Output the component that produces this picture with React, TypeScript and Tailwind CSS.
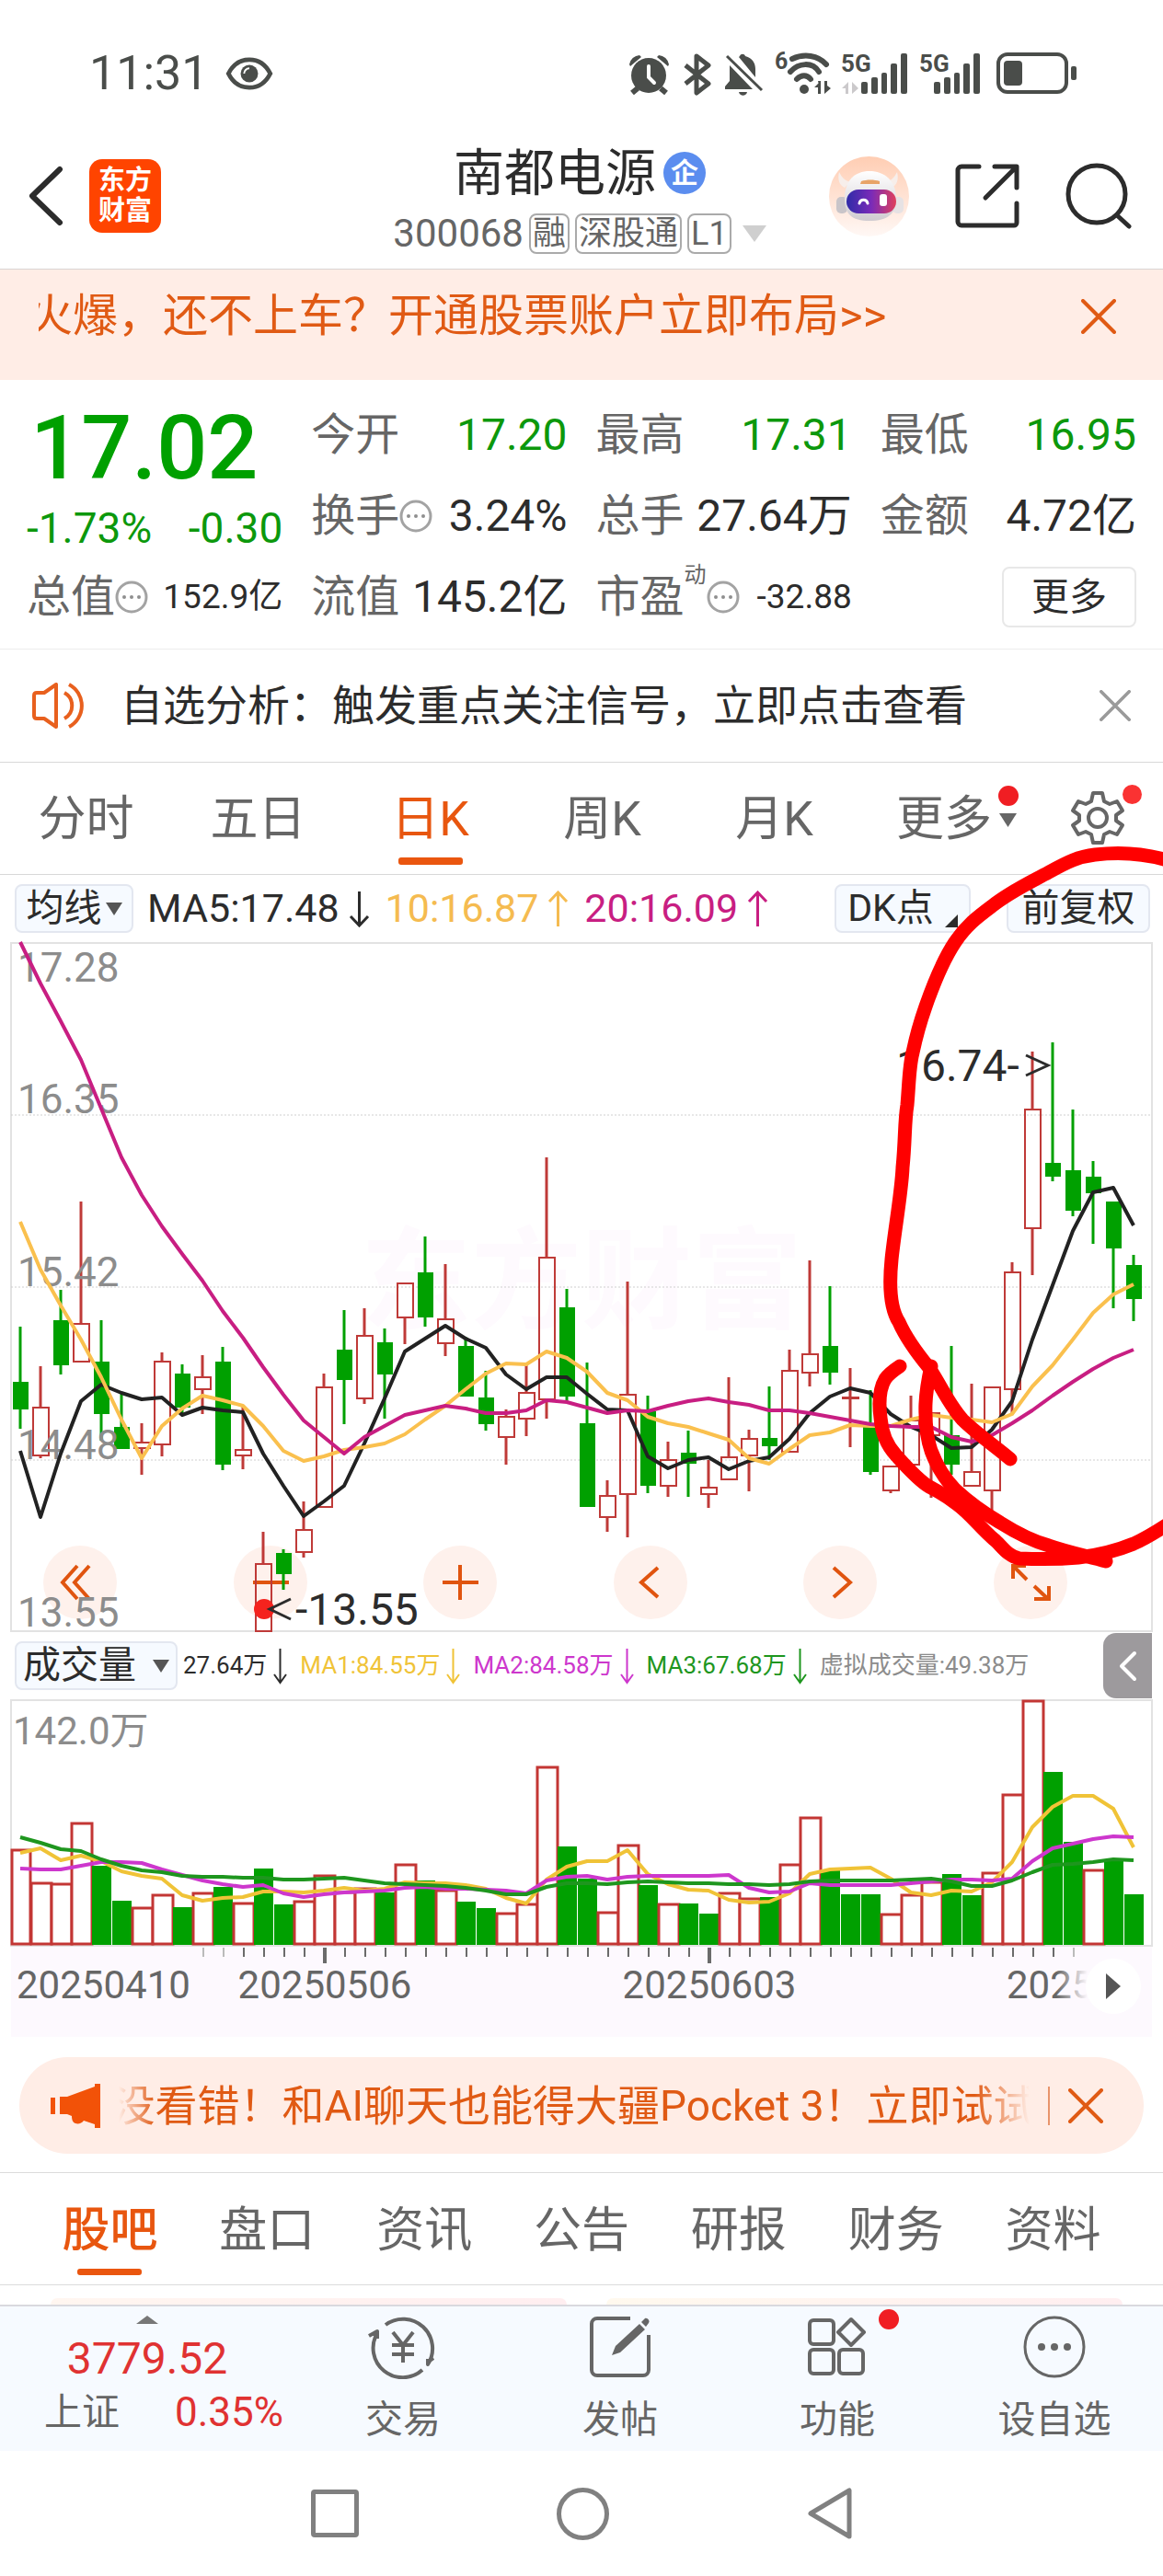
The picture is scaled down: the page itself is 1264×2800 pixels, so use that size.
import { useState } from 'react';
import type { ReactNode } from 'react';

type Dir = 'up' | 'down';

// [high, body top, body bottom, low], in chart units from the top of the frame
const CANDLES = [
  [418, 478, 508, 529], [461, 505, 559, 561], [378, 411, 460, 470], [282, 414, 457, 457],
  [411, 456, 513, 542], [490, 527, 551, 551], [523, 543, 551, 579], [446, 455, 547, 559],
  [459, 469, 506, 512], [449, 472, 487, 513], [440, 456, 568, 574], [504, 551, 559, 573],
  [641, 675, 750, 750], [660, 664, 687, 704], [608, 638, 664, 669], [469, 483, 615, 615],
  [400, 443, 476, 524], [398, 427, 497, 502], [420, 435, 470, 518], [370, 370, 409, 437],
  [320, 359, 408, 418], [350, 409, 437, 450], [429, 439, 494, 494], [466, 495, 524, 531],
  [508, 515, 539, 568], [460, 489, 519, 537], [234, 342, 498, 518], [377, 397, 494, 499],
  [457, 523, 614, 614], [585, 601, 626, 641], [369, 491, 601, 647], [493, 510, 591, 599],
  [543, 562, 592, 603], [531, 555, 567, 603], [563, 592, 601, 615], [473, 559, 585, 585],
  [530, 539, 559, 597], [483, 539, 548, 563], [443, 465, 555, 555], [346, 447, 469, 483],
  [374, 439, 468, 481], [463, 494, 497, 549], [487, 527, 576, 579], [569, 569, 597, 599],
  [493, 519, 569, 569], [511, 511, 537, 604], [439, 536, 568, 579], [480, 575, 592, 592],
  [483, 483, 597, 626], [348, 358, 487, 513], [119, 181, 312, 362], [109, 240, 255, 260],
  [182, 248, 292, 298], [238, 255, 273, 328], [282, 282, 333, 398], [340, 351, 388, 412],
];
const CANDLE_DIR = 'grgrggrrgrgrrgrrgrgrgrggrrrggrrgrgrrrgrrgrgrrrgrrrrggggg';

const MA5 = [553, 625, 556, 499, 481, 490, 497, 495, 514, 506, 509, 511, 556, 591, 624, 608, 591, 545, 496, 445, 431, 417, 431, 441, 470, 486, 473, 473, 491, 508, 509, 559, 572, 563, 560, 573, 564, 560, 540, 512, 494, 485, 490, 513, 527, 536, 550, 549, 530, 499, 432, 373, 314, 272, 267, 308];
const MA10 = [304, 356, 395, 432, 473, 519, 561, 526, 507, 493, 498, 504, 526, 553, 564, 559, 552, 549, 545, 535, 519, 504, 486, 469, 458, 459, 445, 452, 467, 490, 498, 516, 523, 527, 534, 541, 561, 567, 551, 536, 533, 525, 526, 526, 519, 514, 517, 519, 522, 513, 483, 460, 432, 403, 383, 372];
const MA20 = [0, 45, 86, 128, 181, 234, 275, 309, 339, 368, 401, 430, 462, 492, 520, 538, 556, 538, 526, 514, 509, 504, 507, 512, 512, 509, 498, 500, 506, 512, 509, 510, 504, 499, 496, 500, 503, 509, 509, 512, 516, 520, 524, 526, 527, 527, 538, 543, 536, 523, 509, 493, 478, 464, 452, 443];

const VOLUMES = [163, 199, 200, 134, 181, 219, 226, 212, 226, 210, 204, 221, 184, 223, 219, 191, 209, 205, 210, 179, 197, 207, 220, 227, 232, 222, 73, 160, 195, 231, 158, 202, 222, 222, 233, 210, 216, 215, 179, 128, 186, 212, 212, 233, 212, 198, 190, 213, 188, 103, 1, 79, 155, 185, 175, 212];
const VOLUME_DIR = 'rrrrggrrgrgrggrrrrgrgrggrrrggrrgrggrrgrrgggrrrggrrrggrgg';
const VMA1 = [167, 162, 175, 170, 176, 187, 192, 195, 213, 219, 216, 215, 209, 209, 210, 208, 205, 208, 206, 199, 200, 200, 202, 206, 216, 222, 196, 182, 176, 176, 164, 190, 201, 207, 208, 218, 221, 220, 211, 190, 185, 184, 183, 195, 210, 213, 208, 209, 199, 177, 139, 117, 105, 105, 119, 161];
const VMA2 = [184, 185, 185, 181, 177, 177, 178, 185, 191, 197, 201, 204, 202, 211, 215, 212, 210, 209, 208, 205, 204, 206, 206, 207, 208, 211, 197, 193, 192, 196, 193, 192, 192, 192, 192, 191, 205, 210, 209, 200, 202, 202, 202, 202, 200, 198, 196, 196, 197, 195, 176, 162, 157, 152, 149, 150];
const VMA3 = [150, 156, 163, 165, 174, 181, 186, 188, 192, 193, 193, 194, 194, 196, 196, 195, 194, 197, 200, 201, 202, 203, 205, 208, 212, 212, 204, 200, 200, 201, 199, 198, 199, 200, 200, 201, 201, 202, 201, 198, 197, 197, 197, 197, 196, 195, 198, 203, 203, 197, 188, 180, 179, 177, 174, 175];

const RED = '#bf3a38';
const GREEN = '#00a000';

const xAt = (i: number) => 22 + i * 22;
const toPoints = (values: number[]) => values.map((v, i) => `${xAt(i)},${v}`).join(' ');

function StatusBar() {
  return (
    <div className="flex h-[160px] items-center justify-between pr-[93px] pl-[97px] text-[#4a4d4a]">
      <div className="flex items-center gap-[18px]">
        <span className="text-[52px] leading-none">11:31</span>
        <svg className="h-[36px] w-[52px]" viewBox="0 0 54 38" fill="none">
          <path d="M3 19C8 9 16 3 27 3s19 6 24 16c-5 10-13 16-24 16S8 29 3 19z" stroke="currentColor" strokeWidth="5" />
          <circle cx="27" cy="19" r="10" fill="currentColor" />
          <path d="M27 13a6 6 0 0 0-6 6" stroke="#fff" strokeWidth="2" />
        </svg>
      </div>
      <svg className="h-[50px] w-[488px] overflow-visible" viewBox="683 54 488 50" fill="currentColor">
        {/* alarm */}
        <circle cx="705" cy="81" r="19" />
        <path d="M684 69a12 12 0 0 1 11-10l2 2-12 10zM727 69a12 12 0 0 0-11-10l-2 2 12 10z" />
        <path d="M693 95l-6 5M718 95l6 5" stroke="currentColor" strokeWidth="6" />
        <path d="M705 71v12l6 6" stroke="#fff" strokeWidth="4" fill="none" strokeLinecap="round" />
        {/* bluetooth */}
        <path d="M745 70l25 20-13 10V60l13 10-25 20" fill="none" stroke="currentColor" strokeWidth="5" strokeLinejoin="round" />
        {/* muted bell */}
        <path d="M793 70l25 26h-30v-3l5-6zM803 61l1-1c1-3 5-3 6 0 8 2 11 8 11 14v9z" />
        <path d="M790 60l38 37" stroke="currentColor" strokeWidth="3" />
        <path d="M803 99h9c-1 5-8 5-9 0z" />
        {/* wifi */}
        <text x="842" y="74" fontSize="25" fontWeight="700">6</text>
        <g fill="none" stroke="currentColor" strokeWidth="6" strokeLinecap="round">
          <path d="M861 63c13-6 28-4 37 6" />
          <path d="M859 77c9-10 24-11 31 0" />
          <path d="M866 85c5-5 11-5 15 0" />
        </g>
        <circle cx="874" cy="96" r="5" />
        <path d="M892 87v14h-3v-7h-4zM896 101V87h3v5l4 3zM889 87h3v14" />
        {/* signal */}
        <text x="914" y="77" fontSize="26" fontWeight="700">5G</text>
        <path d="M922 88v13h-3v-6h-4zM926 101V88l7 7z" fill="#cbc9cb" />
        <rect x="936" y="88" width="7" height="13" rx="2" />
        <rect x="947" y="83" width="7" height="18" rx="2" />
        <rect x="958" y="78" width="6" height="23" rx="2" />
        <rect x="968" y="68" width="7" height="33" rx="2" />
        <rect x="979" y="57" width="7" height="44" rx="2" />
        <text x="999" y="77" fontSize="26" fontWeight="700">5G</text>
        <rect x="1015" y="88" width="7" height="13" rx="2" />
        <rect x="1026" y="83" width="7" height="18" rx="2" />
        <rect x="1037" y="78" width="6" height="23" rx="2" />
        <rect x="1047" y="68" width="7" height="33" rx="2" />
        <rect x="1058" y="57" width="7" height="44" rx="2" />
        {/* battery */}
        <rect x="1085" y="58" width="74" height="41" rx="10" fill="none" stroke="currentColor" strokeWidth="4" />
        <rect x="1091" y="65" width="20" height="27" rx="4" />
        <rect x="1164" y="71" width="6" height="15" rx="2" />
      </svg>
    </div>
  );
}

function Robot() {
  return (
    <svg className="h-[87px] w-[87px]" viewBox="0 0 87 87">
      <defs>
        <linearGradient id="halo" x1="0" y1="0" x2="0" y2="1">
          <stop offset="0" stopColor="#ffcdb3" />
          <stop offset="1" stopColor="#fff8f5" />
        </linearGradient>
        <linearGradient id="visor" x1="0" y1="0" x2="1" y2="0">
          <stop offset="0" stopColor="#2f2ba8" />
          <stop offset="0.5" stopColor="#7a2bb8" />
          <stop offset="1" stopColor="#e0405c" />
        </linearGradient>
        <linearGradient id="shell" x1="0" y1="0" x2="0" y2="1">
          <stop offset="0" stopColor="#ffffff" />
          <stop offset="1" stopColor="#cfcbd0" />
        </linearGradient>
      </defs>
      <circle cx="43.5" cy="43.5" r="43.5" fill="url(#halo)" />
      <path d="M11 17c-2 8 0 14 6 17l6-6c-6-2-9-5-12-11zM74 17c2 8 0 14-6 17l-6-6c6-2 9-5 12-11z" fill="#f7eeea" />
      <rect x="8" y="44" width="12" height="18" rx="5" fill="#c9c5c9" />
      <rect x="69" y="44" width="12" height="18" rx="5" fill="#e6e2e4" />
      <path d="M17 46C17 26 28 16 44 16s29 10 29 30c0 16-9 24-29 24S17 62 17 46z" fill="url(#shell)" />
      <path d="M35 27c6-2 14-2 20 0v3H34z" fill="#e8a468" />
      <rect x="19" y="36" width="54" height="26" rx="13" fill="url(#visor)" />
      <path d="M33 51c1-5 8-5 9 0" stroke="#fff" strokeWidth="3" fill="none" strokeLinecap="round" />
      <rect x="55" y="41" width="8" height="13" rx="3" fill="#fff" />
    </svg>
  );
}

function Header() {
  return (
    <header className="flex h-[133px] items-center justify-between border-b border-[#d9d4d2] pr-[34px] pb-[26px] pl-[30px] text-[#2c2c2c]">
      <div className="flex w-[346px] items-center gap-[28px]">
        <button aria-label="返回">
          <svg className="h-[66px] w-[39px]" viewBox="0 0 39 66" fill="none" stroke="currentColor" strokeWidth="6" strokeLinejoin="round" strokeLinecap="round">
            <path d="M35 4L5 33l30 29" />
          </svg>
        </button>
        <div className="flex h-[80px] w-[78px] flex-col items-center justify-center rounded-[14px] bg-[#ff4400] text-[29px] leading-[33px] font-bold text-white">
          <span>东方</span>
          <span>财富</span>
        </div>
      </div>
      <div className="flex flex-col items-center gap-[16px] self-start">
        <h1 className="flex items-center gap-[8px] text-[55px] leading-[56px]">
          南都电源
          <span className="flex h-[46px] w-[46px] items-center justify-center rounded-full bg-[#5b8def] text-[30px] font-bold text-white">企</span>
        </h1>
        <div className="flex items-center gap-[6px] text-[#666]">
          <span className="text-[42px] leading-[44px]">300068</span>
          <span className="rounded-[8px] border-2 border-[#aaa] px-[2px] text-[36px] leading-[40px]">融</span>
          <span className="rounded-[8px] border-2 border-[#aaa] px-[2px] text-[36px] leading-[40px]">深股通</span>
          <span className="rounded-[8px] border-2 border-[#aaa] px-[2px] text-[36px] leading-[40px]">L1</span>
          <svg className="ml-[6px] h-[18px] w-[26px]" viewBox="0 0 26 18"><path d="M0 0h26L13 18z" fill="#cfcfcf" /></svg>
        </div>
      </div>
      <div className="flex w-[346px] items-center justify-end gap-[50px]">
        <Robot />
        <button aria-label="分享">
          <svg className="h-[70px] w-[70px]" viewBox="0 0 70 70" fill="none" stroke="currentColor" strokeWidth="5" strokeLinecap="round" strokeLinejoin="round">
            <path d="M26 3H7a4 4 0 0 0-4 4v56a4 4 0 0 0 4 4h57a3 3 0 0 0 3-3V43M43 3h24v23M66 4L33 37" />
          </svg>
        </button>
        <button aria-label="搜索">
          <svg className="h-[72px] w-[72px]" viewBox="0 0 72 72" fill="none" stroke="currentColor" strokeWidth="5" strokeLinecap="round">
            <circle cx="34" cy="34" r="31" />
            <path d="M56 57l13 12" />
          </svg>
        </button>
      </div>
    </header>
  );
}

function Cross({ className }: { className: string }) {
  return (
    <svg className={className} viewBox="0 0 38 38" fill="none" stroke="currentColor" strokeWidth="4" strokeLinecap="round">
      <path d="M2 2l34 34M36 2L2 36" />
    </svg>
  );
}

function InfoDots() {
  return (
    <svg className="h-9 w-9 shrink-0" viewBox="0 0 36 36" fill="#8f8f8f">
      <circle cx="18" cy="18" r="16" fill="none" stroke="#a3a3a3" strokeWidth="3" />
      <circle cx="10" cy="18" r="2" />
      <circle cx="18" cy="18" r="2" />
      <circle cx="26" cy="18" r="2" />
    </svg>
  );
}

interface StatProps {
  label: string;
  value: string;
  green?: boolean;
  small?: boolean;
  info?: boolean;
  sup?: string;
}

function Stat({ label, value, green, small, info, sup }: StatProps) {
  return (
    <div className="flex h-[88px] items-center justify-between whitespace-nowrap">
      <span className="flex items-center text-[48px] text-[#666]">
        {label}
        {sup && <sup className="top-0 self-start text-[24px] leading-none">{sup}</sup>}
        {info && <InfoDots />}
      </span>
      <span className={`${small ? 'text-[37px]' : 'text-[48px]'} ${green ? 'text-[#0c980c]' : 'text-[#2c2c2c]'}`}>{value}</span>
    </div>
  );
}

function Quote() {
  return (
    <section className="grid grid-cols-4 gap-x-[31px] border-b border-[#ececec] px-[29px] pt-[16px] pb-[12px]">
      <div className="row-span-2 text-[#00a000]">
        <div className="pt-[10px] pl-1 text-[97px] leading-[96px] font-medium">17.02</div>
        <div className="mt-[16px] flex justify-between text-[46px] leading-[46px] text-[#0c980c]">
          <span>-1.73%</span>
          <span>-0.30</span>
        </div>
      </div>
      <Stat label="今开" value="17.20" green />
      <Stat label="最高" value="17.31" green />
      <Stat label="最低" value="16.95" green />
      <Stat label="换手" value="3.24%" info />
      <Stat label="总手" value="27.64万" />
      <Stat label="金额" value="4.72亿" />
      <Stat label="总值" value="152.9亿" info small />
      <Stat label="流值" value="145.2亿" />
      <Stat label="市盈" value="-32.88" sup="动" info small />
      <div className="flex items-center justify-end">
        <button className="h-[66px] w-[146px] rounded-[8px] border-2 border-[#e8e8e8] text-[41px] leading-none text-[#2c2c2c]">更多</button>
      </div>
    </section>
  );
}

function PeriodTabs() {
  const [active, setActive] = useState('日K');
  return (
    <nav className="flex h-[122px] border-b border-[#d8d8d8] text-[52px] text-[#666]">
      {['分时', '五日', '日K', '周K', '月K', '更多'].map((name) => (
        <button key={name} onClick={() => setActive(name)} className={`flex flex-1 flex-col items-center pt-[32px] ${active === name ? 'text-[#e8560f]' : ''}`}>
          <span className={`relative flex items-center leading-[60px] ${name === '更多' ? 'ml-[22px]' : ''}`}>
            {name}
            {name === '更多' && (
              <>
                <svg className="ml-[8px] h-[15px] w-[19px]" viewBox="0 0 19 15"><path d="M0 0h19L9.5 15z" fill="#666" /></svg>
                <span className="absolute -top-[7px] -right-[2px] h-[22px] w-[22px] rounded-full bg-[#f01e23]" />
              </>
            )}
          </span>
          {active === name && <span className="mt-[11px] h-[8px] w-[70px] rounded-[3px] bg-[#ea560f]" />}
        </button>
      ))}
      <button aria-label="设置" className="flex w-[142px] justify-center pt-[30px]">
        <span className="relative">
          <svg className="h-[60px] w-[60px]" viewBox="0 0 60 60" fill="none" stroke="#666" strokeWidth="4" strokeLinejoin="round">
            <path d="M25 3h10l2 9 6 3 8-3 6 10-7 5v6l7 5-6 10-8-3-6 3-2 9H25l-2-9-6-3-8 3-6-10 7-5v-6l-7-5 6-10 8 3 6-3z" />
            <circle cx="30" cy="30" r="10" />
          </svg>
          <span className="absolute -top-[6px] -right-[18px] h-[21px] w-[21px] rounded-full bg-[#fa3232]" />
        </span>
      </button>
    </nav>
  );
}

function Arrow({ dir, small }: { dir: Dir; small?: boolean }) {
  return (
    <svg className={small ? 'h-[40px] w-[15px]' : 'h-[40px] w-[23px]'} viewBox={small ? '4 0 15 40' : '0 0 23 40'} fill="none" stroke="currentColor" strokeWidth={small ? 2 : 3}>
      <path d={dir === 'down' ? (small ? 'M11.5 1v37M5 29l6.500 9 6.500-9' : 'M11.500 1v37M2 28l9.500 10 9.500-10') : 'M11.500 39V2M2 12l9.500-10L21 12'} />
    </svg>
  );
}

function Indicator({ children, dir, className, small }: { children: ReactNode; dir?: Dir; className: string; small?: boolean }) {
  return (
    <span className={`flex items-center whitespace-nowrap ${small ? 'gap-[7px]' : 'gap-[10px]'} ${className}`}>
      {children}
      {dir && <Arrow dir={dir} small={small} />}
    </span>
  );
}

const chip = 'flex h-[53px] items-center justify-center rounded-[8px] border-2 border-[#e3e7f0] bg-[#f6faff] text-[41px] leading-none text-[#2c2c2c]';

function PriceChart() {
  return (
    <svg className="pointer-events-none relative block w-full overflow-visible" viewBox="0 0 1264 750">
      <rect x="12" y="1" width="1240" height="748" fill="none" stroke="#e2e2e2" strokeWidth="2" />
      <text x="392" y="411" fontSize="120" fontWeight="700" fill="#fefafe">东方财富</text>
      {[188, 375, 563].map((y) => (
        <line key={y} x1="12" x2="1252" y1={y} y2={y} stroke="#cfcfcf" strokeDasharray="2 2" />
      ))}
      {CANDLES.map(([high, top, bottom, low], i) => {
        const x = xAt(i);
        const up = CANDLE_DIR[i] === 'r';
        return up ? (
          <g key={i} stroke={RED} strokeWidth="2" fill="none">
            <path d={`M${x} ${high}V${top}M${x} ${bottom}V${low}`} strokeWidth="3" />
            <rect x={x - 8} y={top + 1} width="17" height={Math.max(bottom - top - 2, 1)} />
          </g>
        ) : (
          <g key={i} fill={GREEN}>
            <path d={`M${x} ${high}V${low}`} stroke={GREEN} strokeWidth="3" />
            <rect x={x - 8} y={top} width="17" height={bottom - top} />
          </g>
        );
      })}
      <g fontSize="44" fill="#8c8c8c">
        <text x="19" y="43">17.28</text>
        <text x="19" y="186">16.35</text>
        <text x="19" y="374">15.42</text>
        <text x="19" y="562">14.48</text>
        <text x="19" y="744">13.55</text>
      </g>
      <g fill="none" strokeWidth="4" strokeLinejoin="round">
        <polyline points={toPoints(MA5)} stroke="#222" />
        <polyline points={toPoints(MA10)} stroke="#fac04e" />
        <polyline points={toPoints(MA20)} stroke="#c81e82" />
      </g>
      {/* lowest and highest price */}
      <circle cx="287" cy="725" r="11" fill="#f5231e" />
      <g fill="none" stroke="#2c2c2c" strokeWidth="3">
        <path d="M316 714l-23 11 23 11" />
        <path d="M1115 123l24 11-24 11" />
      </g>
      <g fontSize="48" fill="#2c2c2c">
        <text x="321" y="742">-13.55</text>
        <text x="974" y="151">16.74-</text>
      </g>
    </svg>
  );
}

const CONTROLS = [
  { label: '最左', path: 'M37 22L21 40l16 18M50 22L34 40l16 18' },
  { label: '缩小', path: 'M21 40h39' },
  { label: '放大', path: 'M21 40h39M40 21v38' },
  { label: '左移', path: 'M48 24L30 40l18 16' },
  { label: '右移', path: 'M33 24l18 16-18 16' },
  { label: '全屏', path: 'M21 36V22h14M22 23l14 14M60 44v14H44M58 57L44 44' },
];

function ChartControls() {
  return (
    <div className="absolute right-[104px] bottom-[14px] left-[47px] flex justify-between">
      {CONTROLS.map((c) => (
        <button key={c.label} aria-label={c.label} className="h-[80px] w-[80px] rounded-full bg-[#fef1ec]">
          <svg viewBox="0 0 80 80" fill="none" stroke="#e0540f" strokeWidth="4">
            <path d={c.path} />
          </svg>
        </button>
      ))}
    </div>
  );
}

function VolumeChart() {
  return (
    <svg className="block w-full" viewBox="0 0 1264 367">
      <rect x="12" y="267" width="1240" height="100" fill="#fdf9fe" />
      <rect x="12" y="1" width="1240" height="267" fill="none" stroke="#e2e2e2" strokeWidth="2" />
      <text x="14" y="49" fontSize="42" fill="#8c8c8c">142.0万</text>
      {VOLUMES.map((top, i) => {
        const x = xAt(i);
        return VOLUME_DIR[i] === 'r' ? (
          <rect key={i} x={i === 0 ? 13 : x - 10} y={top + 1} width={i === 0 ? 20 : 22} height={265 - top} fill="#fff" stroke="#c33634" strokeWidth="3" />
        ) : (
          <rect key={i} x={x - 10} y={top} width="21" height={267 - top} fill={GREEN} />
        );
      })}
      <g fill="none" strokeWidth="4" strokeLinejoin="round">
        <polyline points={toPoints(VMA1)} stroke="#f0c337" />
        <polyline points={toPoints(VMA2)} stroke="#cd37cd" />
        <polyline points={toPoints(VMA3)} stroke="#1e961e" />
      </g>
      {Array.from({ length: 44 }, (_, n) => n + 9).map((i) => {
        const major = i === 15 || i === 34;
        const faded = i < 11 || i === 52;
        return <line key={i} x1={xAt(i) + 1} x2={xAt(i) + 1} y1="270" y2={major ? 287 : 280} stroke={faded ? '#bbb' : '#6b6b6b'} strokeWidth={major ? 4 : 2} />;
      })}
      <defs>
        <linearGradient id="dateFade" gradientUnits="userSpaceOnUse" x1="1148" y1="0" x2="1182" y2="0">
          <stop offset="0" stopColor="#666" />
          <stop offset="1" stopColor="#666" stopOpacity="0" />
        </linearGradient>
      </defs>
      <g fontSize="42" fill="#666">
        <text x="18" y="325">20250410</text>
        <text x="353" y="325" textAnchor="middle">20250506</text>
        <text x="771" y="325" textAnchor="middle">20250603</text>
        <text x="1094" y="325" fill="url(#dateFade)">2025</text>
      </g>
      <circle cx="1210" cy="312" r="30" fill="#fff" />
      <path d="M1202 298v28l16-14z" fill="#555" />
    </svg>
  );
}

// hand-drawn marker strokes over the chart
function Marker() {
  return (
    <svg className="pointer-events-none absolute inset-x-0 top-0 w-full" viewBox="0 0 1264 900" fill="none" stroke="#ff0000" strokeWidth="15" strokeLinecap="round" strokeLinejoin="round">
      <path d="M1098 757C1080 742 1060 728 1046 714C1030 696 1020 672 1010 658C996 641 984 624 977 608C968 594 966 570 969 540C972 510 980 466 981 440C984 410 983 390 986 372C988 350 988 330 992 315C996 296 1000 282 1006 265C1014 242 1024 216 1038 195C1050 177 1062 168 1078 156C1098 140 1120 130 1140 119C1160 108 1172 102 1190 100C1215 97 1245 98 1275 108" />
      <path d="M1275 824C1260 834 1248 842 1232 849C1210 858 1190 862 1172 864C1150 866 1130 866 1108 865C1094 862 1088 850 1080 844C1066 832 1054 816 1040 806C1030 798 1020 792 1010 787C998 780 984 764 974 753C962 740 958 726 957 712C955 696 956 680 962 670C966 664 972 660 978 656" />
      <path d="M1012 656C1008 674 1005 690 1006 708C1006 724 1008 736 1012 748C1018 764 1028 780 1038 790C1052 803 1070 816 1087 826C1106 838 1122 846 1140 851C1160 858 1180 862 1202 868" />
    </svg>
  );
}

function Promo() {
  return (
    <div className="mx-[21px] mt-[22px] mb-[20px] flex h-[105px] items-center rounded-full bg-[#ffede6] pr-[44px] pl-[34px] text-[#e05a14]">
      <svg className="h-[48px] w-[54px] shrink-0" viewBox="0 0 54 48" fill="#f25208">
        <rect x="0" y="15" width="5" height="18" />
        <path d="M10 14h8L48 3V0h6v48h-6v-4l-12-4c-2 3-6 4-9 3s-4-4-4-8l-5-2h-8z" />
      </svg>
      <div className="mx-[20px] flex min-w-0 flex-1 justify-center overflow-hidden text-[46px] leading-[60px] whitespace-nowrap [mask-image:linear-gradient(to_right,transparent,black_40px,black_calc(100%-60px),transparent)]">
        没看错！和AI聊天也能得大疆Pocket 3！立即试试
      </div>
      <span className="h-[42px] w-[2px] shrink-0 bg-[#e8956c]" />
      <button aria-label="关闭" className="ml-[20px] shrink-0"><Cross className="h-[38px] w-[38px]" /></button>
    </div>
  );
}

function InfoTabs() {
  const [active, setActive] = useState('股吧');
  return (
    <nav className="flex h-[123px] border-y border-[#dcdcdc] px-[34px] text-[52px] text-[#666]">
      {['股吧', '盘口', '资讯', '公告', '研报', '财务', '资料'].map((name) => (
        <button key={name} onClick={() => setActive(name)} className={`flex flex-1 flex-col items-center pt-[33px] leading-[60px] ${active === name ? 'font-medium text-[#e8560f]' : ''}`}>
          {name}
          {active === name && <span className="mt-[11px] h-[7px] w-[70px] rounded-[3px] bg-[#ea560f]" />}
        </button>
      ))}
    </nav>
  );
}

function NavItem({ label, dot, children }: { label: string; dot?: boolean; children: ReactNode }) {
  return (
    <button className="flex flex-1 flex-col items-center gap-[22px] pt-[9px] text-[41px] leading-[44px] text-[#666]">
      <span className="relative">
        <svg className="h-[70px] w-[78px]" viewBox="0 0 78 70" fill="none" stroke="#666" strokeWidth="3" strokeLinejoin="round">
          {children}
        </svg>
        {dot && <span className="absolute -top-[6px] -right-[28px] h-[22px] w-[22px] rounded-full bg-[#f01e23]" />}
      </span>
      {label}
    </button>
  );
}

function BottomNav() {
  return (
    <nav className="flex h-[159px] border-t-2 border-[#d9d9de] bg-[#f6faff]">
      <div className="flex w-[320px] flex-col items-center pt-[10px] text-[#e03232]">
        <svg className="h-[9px] w-[24px]" viewBox="0 0 24 9"><path d="M0 9L12 0l12 9z" fill="#777" /></svg>
        <span className="mt-[14px] text-[48px] leading-[48px]">3779.52</span>
        <span className="mt-[10px] flex w-full items-center justify-between pr-[12px] pl-[48px] text-[44px] leading-[48px]">
          <span className="text-[41px] text-[#666]">上证</span>
          0.35%
        </span>
      </div>
      <NavItem label="交易">
        <path d="M20 11A32 32 0 0 1 66 54V48M72 47l-7 5M60 60A32 32 0 0 1 11 20M2 23l9-5v8" strokeWidth="4" />
        <path d="M28 19l11 14 11-14M27 33h24M27 43h24M39 33v19" strokeWidth="4" />
      </NavItem>
      <NavItem label="发帖">
        <path d="M50 4H14a6 6 0 0 0-6 6v50a6 6 0 0 0 6 6h50a6 6 0 0 0 6-6V22" strokeWidth="4" />
        <path d="M30 44l4-10 26-24 6 6-27 25zM62 8l4-4c2-1 6 2 4 5l-3 4z" fill="#666" stroke="none" />
      </NavItem>
      <NavItem label="功能" dot>
        <rect x="9" y="6" width="26" height="26" rx="4" strokeWidth="4" />
        <rect x="9" y="38" width="26" height="26" rx="4" strokeWidth="4" />
        <rect x="41" y="38" width="26" height="26" rx="4" strokeWidth="4" />
        <path d="M54 5l14 14-14 14-14-14z" strokeWidth="4" />
      </NavItem>
      <NavItem label="设自选">
        <circle cx="39" cy="35" r="32" />
        <g fill="#666" stroke="none">
          <circle cx="25" cy="35" r="4" />
          <circle cx="39" cy="35" r="4" />
          <circle cx="53" cy="35" r="4" />
        </g>
      </NavItem>
    </nav>
  );
}

export default function App() {
  return (
    <div className="min-h-screen w-full overflow-hidden bg-white font-['Roboto','Noto_Sans_CJK_SC',sans-serif]">
      <StatusBar />
      <Header />

      <div className="flex h-[120px] items-center justify-between bg-[#ffede6] pr-[51px] pb-[18px] pl-[42px] text-[#e05a14]">
        <div className="flex overflow-hidden text-[49px] leading-[60px] whitespace-nowrap">
          <a href="#open" className="-ml-[12px]">火爆，还不上车？开通股票账户立即布局&gt;&gt;</a>
        </div>
        <button aria-label="关闭"><Cross className="h-[38px] w-[38px]" /></button>
      </div>

      <Quote />

      <div className="flex h-[123px] items-center border-b border-[#d8d8d8] pr-[35px] pl-[34px]">
        <svg className="h-[50px] w-[62px]" viewBox="0 0 62 50" fill="none" stroke="#e8601e" strokeWidth="4" strokeLinejoin="round">
          <path d="M2 13q0-2 3-2h8l14-9v46l-14-9H5q-3 0-3-2zM36 5a20 20 0 0 1 0 40M36 14a11 11 0 0 1 0 22M40 3a23 23 0 0 1 0 44" stroke="none" />
          <path d="M3 14q0-3 3-3h8l13-9v46l-13-9H6q-3 0-3-3zM36 11a16 16 0 0 1 0 28M41 2a26 26 0 0 1 0 46" />
        </svg>
        <span className="ml-[35px] flex-1 text-[46px] text-[#2c2c2c]">自选分析：触发重点关注信号，立即点击查看</span>
        <button aria-label="关闭" className="text-[#9a9a9a]"><Cross className="h-[34px] w-[34px]" /></button>
      </div>

      <div className="relative">
        <PeriodTabs />
        <div className="flex h-[73px] items-center pr-[14px] pl-[16px] text-[43px] leading-none">
          <button className={`${chip} w-[129px] gap-[4px]`}>
            均线
            <svg className="h-[14px] w-[18px]" viewBox="0 0 18 14"><path d="M0 0h18L9 14z" fill="#555" /></svg>
          </button>
          <div className="ml-[15px] flex flex-1 gap-[17px]">
            <Indicator dir="down" className="text-[#2c2c2c]">MA5:17.48</Indicator>
            <Indicator dir="up" className="text-[#f5bb50]">10:16.87</Indicator>
            <Indicator dir="up" className="text-[#c81e82]">20:16.09</Indicator>
          </div>
          <button className={`${chip} mr-[39px] w-[148px] gap-[12px]`}>
            DK点
            <svg className="h-[18px] w-[14px] self-end" viewBox="0 0 14 18"><path d="M14 0v14H0z" fill="#2c2c2c" /></svg>
          </button>
          <button className={`${chip} w-[156px]`}>前复权</button>
        </div>

        <div className="relative">
          <ChartControls />
          <PriceChart />
        </div>

        <div className="flex h-[73px] items-center pr-[12px] pl-[16px] text-[26px]">
          <button className={`${chip} w-[177px] gap-[18px]`}>
            成交量
            <svg className="h-[14px] w-[18px]" viewBox="0 0 18 14"><path d="M0 0h18L9 14z" fill="#555" /></svg>
          </button>
          <div className="ml-[6px] flex flex-1 gap-[14px]">
            <Indicator small dir="down" className="text-[#2c2c2c]">27.64万</Indicator>
            <Indicator small dir="down" className="text-[#f0c337]">MA1:84.55万</Indicator>
            <Indicator small dir="down" className="text-[#cd37cd]">MA2:84.58万</Indicator>
            <Indicator small dir="down" className="text-[#1e961e]">MA3:67.68万</Indicator>
            <Indicator small className="text-[#8c8c8c]">虚拟成交量:49.38万</Indicator>
          </div>
          <button aria-label="展开" className="flex h-[71px] w-[53px] items-center justify-center rounded-l-[14px] bg-[#9d9a9d]">
            <svg className="h-[34px] w-[20px]" viewBox="0 0 20 34" fill="none" stroke="#fff" strokeWidth="4" strokeLinecap="round" strokeLinejoin="round">
              <path d="M17 3L3 17l14 14" />
            </svg>
          </button>
        </div>

        <VolumeChart />
        <Marker />
      </div>

      <Promo />
      <InfoTabs />
      <div className="flex h-[21px] items-end gap-[43px] pr-[44px] pl-[55px]">
        <div className="h-[7px] flex-1 rounded-t-[7px] bg-linear-to-r from-[#fff6f0] to-[#ffeef0]" />
        <div className="h-[7px] flex-1 rounded-t-[7px] bg-linear-to-r from-[#fff9ee] to-[#ffeef0]" />
      </div>
      <BottomNav />

      <div className="flex h-[136px] items-center justify-center gap-[215px]">
        <button aria-label="最近任务" className="h-[52px] w-[52px] rounded-[4px] border-[5px] border-[#808080]" />
        <button aria-label="主屏幕" className="h-[57px] w-[57px] rounded-full border-[5px] border-[#808080]" />
        <button aria-label="返回上一页">
          <svg className="h-[58px] w-[50px]" viewBox="0 0 50 58" fill="none" stroke="#808080" strokeWidth="5" strokeLinejoin="round">
            <path d="M46 4v50L4 29z" />
          </svg>
        </button>
      </div>
    </div>
  );
}
